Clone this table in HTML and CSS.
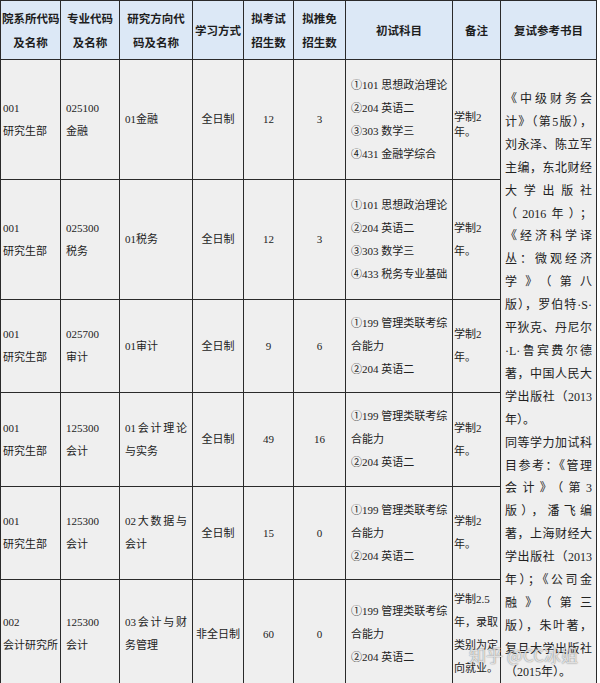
FILE: index.html
```html
<!DOCTYPE html>
<html lang="zh-CN">
<head>
<meta charset="utf-8">
<title>招生专业目录</title>
<link rel="stylesheet" href="styles.css">
</head>
<body>
<div class="page">
  <table class="plan">
    <colgroup>
      <col class="c-dept"><col class="c-major"><col class="c-dir"><col class="c-mode"><col class="c-exam"><col class="c-exempt"><col class="c-subj"><col class="c-note"><col class="c-books">
    </colgroup>
    <thead>
      <tr class="r-head">
        <th>院系所代码<br>及名称</th>
        <th>专业代码<br>及名称</th>
        <th>研究方向代<br>码及名称</th>
        <th>学习方式</th>
        <th>拟考试<br>招生数</th>
        <th>拟推免<br>招生数</th>
        <th>初试科目</th>
        <th>备注</th>
        <th>复试参考书目</th>
      </tr>
    </thead>
    <tbody>
      <tr class="r-1">
        <td class="dept">001<br>研究生部</td>
        <td class="major">025100<br>金融</td>
        <td class="dir">01金融</td>
        <td class="mode">全日制</td>
        <td class="num">12</td>
        <td class="num">3</td>
        <td class="subj"><div>①101 思想政治理论</div><div>②204 英语二</div><div>③303 数学三</div><div>④431 金融学综合</div></td>
        <td class="note tight">学制2年。</td>
        <td class="books" rowspan="6">
          <span class="ln">《中级财务会</span>
          <span class="ln">计》（第5版），</span>
          <span class="ln">刘永泽、陈立军</span>
          <span class="ln">主编，东北财经</span>
          <span class="ln">大学出版社</span>
          <span class="ln">（2016年）；</span>
          <span class="ln">《经济科学译</span>
          <span class="ln">丛：微观经济</span>
          <span class="ln">学》（第八</span>
          <span class="ln">版），罗伯特·S·</span>
          <span class="ln">平狄克、丹尼尔</span>
          <span class="ln">·L·鲁宾费尔德</span>
          <span class="ln">著，中国人民大</span>
          <span class="ln">学出版社（2013</span>
          <span class="ln last">年）。</span>
          <span class="ln">同等学力加试科</span>
          <span class="ln">目参考：《管理</span>
          <span class="ln">会计》（第3</span>
          <span class="ln">版），潘飞编</span>
          <span class="ln">著，上海财经大</span>
          <span class="ln">学出版社（2013</span>
          <span class="ln">年）；《公司金</span>
          <span class="ln">融》（第三</span>
          <span class="ln">版），朱叶著，</span>
          <span class="ln">复旦大学出版社</span>
          <span class="ln last">（2015年）。</span>
        </td>
      </tr>
      <tr class="r-2">
        <td class="dept">001<br>研究生部</td>
        <td class="major">025300<br>税务</td>
        <td class="dir">01税务</td>
        <td class="mode">全日制</td>
        <td class="num">12</td>
        <td class="num">3</td>
        <td class="subj"><div>①101 思想政治理论</div><div>②204 英语二</div><div>③303 数学三</div><div>④433 税务专业基础</div></td>
        <td class="note">学制2年。</td>
      </tr>
      <tr class="r-3">
        <td class="dept">001<br>研究生部</td>
        <td class="major">025700<br>审计</td>
        <td class="dir">01审计</td>
        <td class="mode">全日制</td>
        <td class="num">9</td>
        <td class="num">6</td>
        <td class="subj"><div>①199 管理类联考综合能力</div><div>②204 英语二</div></td>
        <td class="note">学制2年。</td>
      </tr>
      <tr class="r-4">
        <td class="dept">001<br>研究生部</td>
        <td class="major">125300<br>会计</td>
        <td class="dir">01会计理论与实务</td>
        <td class="mode">全日制</td>
        <td class="num">49</td>
        <td class="num">16</td>
        <td class="subj"><div>①199 管理类联考综合能力</div><div>②204 英语二</div></td>
        <td class="note">学制2年。</td>
      </tr>
      <tr class="r-5">
        <td class="dept">001<br>研究生部</td>
        <td class="major">125300<br>会计</td>
        <td class="dir">02大数据与会计</td>
        <td class="mode">全日制</td>
        <td class="num">15</td>
        <td class="num">0</td>
        <td class="subj"><div>①199 管理类联考综合能力</div><div>②204 英语二</div></td>
        <td class="note">学制2年。</td>
      </tr>
      <tr class="r-6">
        <td class="dept">002<br>会计研究所</td>
        <td class="major">125300<br>会计</td>
        <td class="dir">03会计与财务管理</td>
        <td class="mode">非全日制</td>
        <td class="num">60</td>
        <td class="num">0</td>
        <td class="subj"><div>①199 管理类联考综合能力</div><div>②204 英语二</div></td>
        <td class="note">学制2.5年，录取类别为定向就业。</td>
      </tr>
    </tbody>
  </table>
  <div class="watermark">知乎 @CC冰姐</div>
</div>
</body>
</html>
```
FILE: styles.css
```css
html, body {
  margin: 0;
  padding: 0;
  background: #ffffff;
}

.page {
  position: relative;
  width: 600px;
  height: 683px;
  overflow: hidden;
}

.plan {
  border-collapse: collapse;
  table-layout: fixed;
  width: 597px;
  font-family: "Liberation Serif", "Noto Sans CJK SC", serif;
  font-size: 11px;
  color: #222222;
}

.c-dept { width: 60px; }
.c-major { width: 59px; }
.c-dir { width: 73px; }
.c-mode { width: 51px; }
.c-exam { width: 50px; }
.c-exempt { width: 52px; }
.c-subj { width: 107px; }
.c-note { width: 48px; }
.c-books { width: 96px; }

.plan th,
.plan td {
  border: 1px solid #2a2a2a;
  vertical-align: middle;
  padding: 0 5px;
}

.plan th {
  background: #dce8f6;
  font-family: "Noto Sans CJK SC", sans-serif;
  font-weight: 700;
  font-size: 11.5px;
  line-height: 24px;
  text-align: center;
  color: #1e1e1e;
  padding: 0 1px;
  white-space: nowrap;
}

.plan td {
  background: #efefef;
  line-height: 23px;
  text-align: left;
}

.r-head { height: 59px; }
.r-1 { height: 120px; }
.r-2 { height: 120px; }
.r-3 { height: 93px; }
.r-4 { height: 94px; }
.r-5 { height: 93px; }
.r-6 { height: 109px; }

.plan td.dept {
  padding-left: 2px;
  padding-right: 1px;
}

.plan td.dir {
  text-align: justify;
}

.plan td.mode,
.plan td.num {
  text-align: center;
}

.plan td.mode {
  padding: 0 1px;
  white-space: nowrap;
}

.plan td.subj {
  padding: 0 4px 0 5px;
}

.plan td.note {
  padding: 0 1px;
}

.plan td.note.tight {
  line-height: 15px;
  padding-top: 10px;
}

.plan td.books {
  vertical-align: top;
  padding: 28px 4px 0 4px;
  font-size: 12px;
  line-height: 22.9px;
}

.ln {
  display: block;
  text-align: justify;
  text-align-last: justify;
  white-space: nowrap;
}

.ln.last {
  text-align: left;
  text-align-last: left;
}

.watermark {
  position: absolute;
  left: 469px;
  top: 643px;
  font-family: "Noto Sans CJK SC", sans-serif;
  font-size: 17px;
  line-height: 24px;
  color: rgba(255, 255, 255, 0.75);
  text-shadow: 0 0 1px rgba(0, 0, 0, 0.45), 0 0 2px rgba(0, 0, 0, 0.2);
  white-space: nowrap;
}
```
